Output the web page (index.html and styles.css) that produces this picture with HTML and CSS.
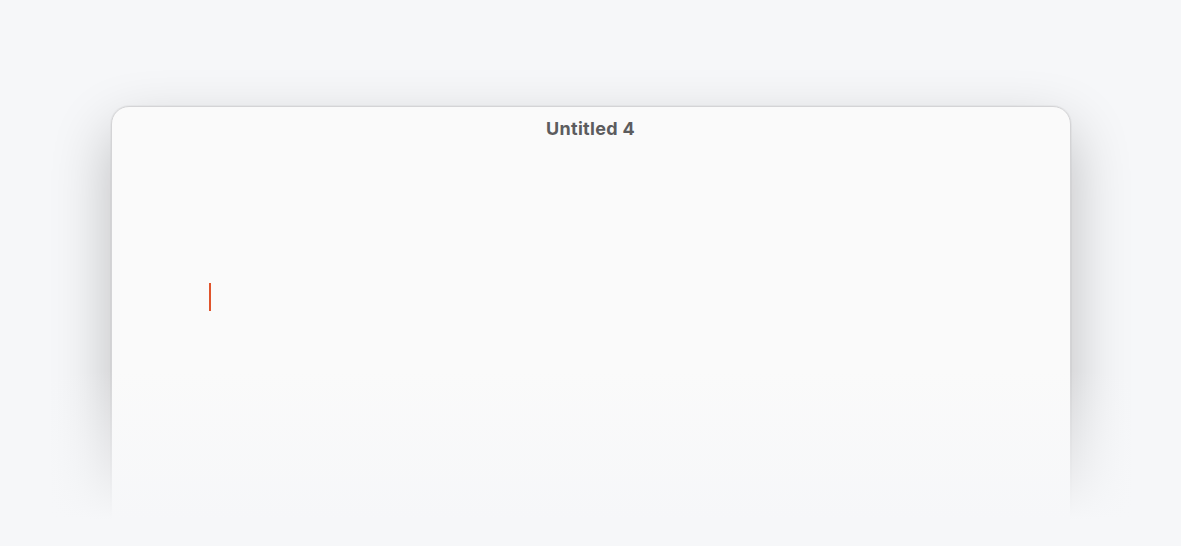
FILE: index.html
```html
<!DOCTYPE html>
<html>
<head>
<meta charset="utf-8">
<link rel="stylesheet" href="styles.css">
</head>
<body>
<div class="stage">
  <div class="window">
    <div class="titlebar">Untitled 4</div>
    <div class="doc">
      <span class="caret"></span>
    </div>
  </div>
  <div class="fade"></div>
</div>
</body>
</html>
```
FILE: styles.css
```css
html, body {
  margin: 0;
  padding: 0;
  background: #f6f7f9;
  overflow: hidden;
}
.stage {
  position: relative;
  width: 1181px;
  height: 546px;
  display: flex;
  justify-content: center;
  padding-top: 106px;
  box-sizing: border-box;
  overflow: hidden;
}
.window {
  width: 960px;
  height: 600px;
  box-sizing: border-box;
  background: #fafafa;
  border: 1px solid #d4d4d6;
  border-radius: 18px;
  box-shadow: 0 24px 60px rgba(0,0,0,0.24), 0 0 0 1px rgba(0,0,0,0.03);
  font-family: Inter, "Liberation Sans", sans-serif;
}
.titlebar {
  height: 42px;
  padding-top: 1px;
  box-sizing: border-box;
  text-align: center;
  font-size: 18px;
  font-weight: 700;
  letter-spacing: 0.3px;
  color: #5c5c5e;
  line-height: 42px;
}
.doc {
  padding: 133px 0 0 97px;
}
.caret {
  display: block;
  width: 2px;
  height: 28px;
  margin-top: 1px;
  background: #e0542c;
}
.fade {
  position: absolute;
  left: 0;
  right: 0;
  top: 370px;
  height: 176px;
  background: linear-gradient(to bottom, rgba(246,247,249,0) 0%, rgba(246,247,249,0.6) 55%, #f6f7f9 85%);
  pointer-events: none;
}
```
